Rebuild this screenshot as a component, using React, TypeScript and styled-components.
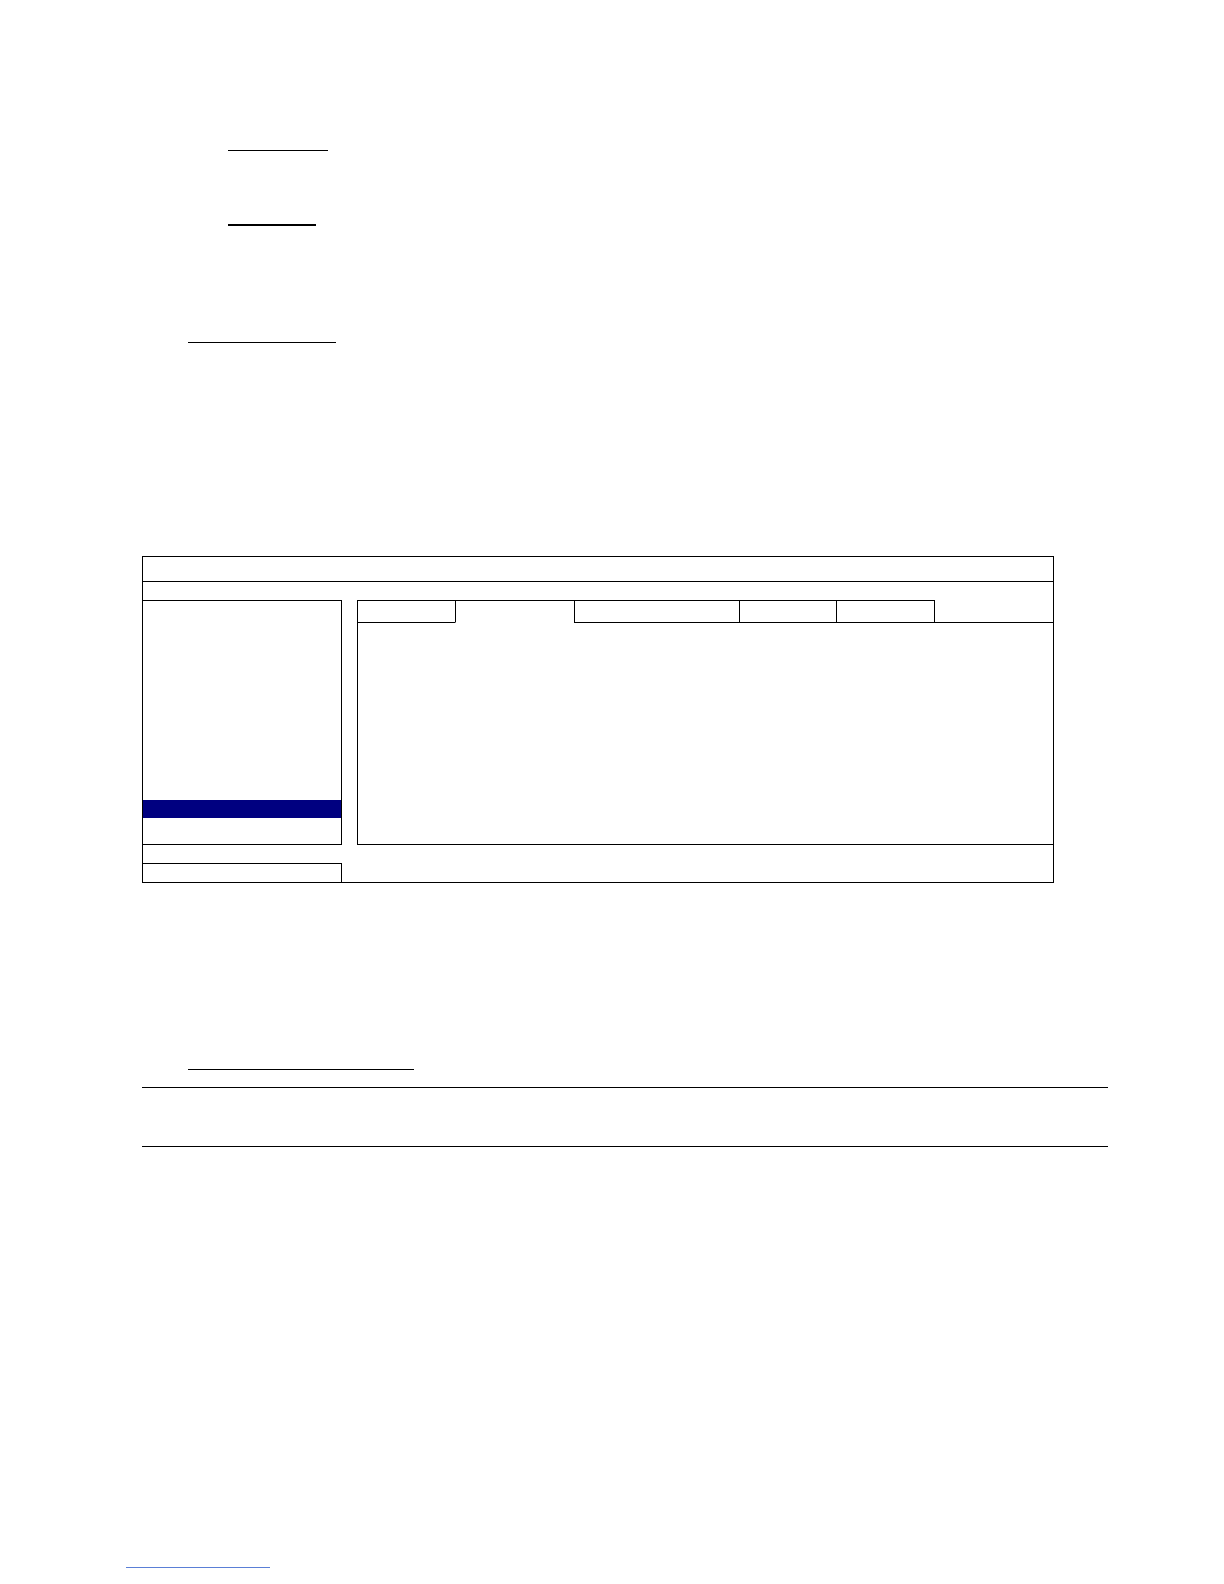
import styled, { createGlobalStyle } from 'styled-components'

const GlobalStyle = createGlobalStyle`
  html, body {
    margin: 0;
    padding: 0;
    background: #fff;
    font-family: 'Liberation Sans', Arial, sans-serif;
  }
  * { box-sizing: border-box; }
`

// ─── Page ──────────────────────────────────────────────────────────────────────
const Page = styled.div`
  width: 1224px;
  min-height: 1584px;
  display: flex;
  flex-direction: column;
  align-items: flex-start;
  background: #fff;
`

// blank field underlines / rules of the document
const Line = styled.div<{ $left: number; $width: number; $top: number; $thick?: number; $color?: string }>`
  margin-left: ${p => p.$left}px;
  margin-top: ${p => p.$top}px;
  width: ${p => p.$width}px;
  height: 0;
  border-top: ${p => p.$thick ?? 1}px solid ${p => p.$color ?? '#000'};
`

// ─── Dialog ────────────────────────────────────────────────────────────────────
const Dialog = styled.div`
  margin-left: 142px;
  margin-top: 213px;
  width: 912px;
  border: 1px solid #000;
  background: #fff;
`

const TitleBar = styled.div`
  height: 25px;
  border-bottom: 1px solid #000;
`

const SubBar = styled.div`
  height: 18px;
`

const Body = styled.div`
  display: grid;
  grid-template-columns: 199px 696px;
  column-gap: 15px;
  height: 282px;
`

const LeftCol = styled.div`
  display: flex;
  flex-direction: column;
`

const MenuPanel = styled.div`
  height: 245px;
  border-top: 1px solid #000;
  border-right: 1px solid #000;
  border-bottom: 1px solid #000;
  padding-top: 1px;
  display: flex;
  flex-direction: column;
`

const MenuItem = styled.div<{ $active?: boolean }>`
  height: 18px;
  flex-shrink: 0;
  background: ${p => (p.$active ? '#000080' : 'transparent')};
`

const SmallBox = styled.div`
  margin-top: 18px;
  height: 19px;
  border-top: 1px solid #000;
  border-right: 1px solid #000;
`

const RightCol = styled.div`
  display: flex;
  flex-direction: column;
`

const TabRow = styled.div`
  display: flex;
  height: 23px;
`

const Tab = styled.div<{ $w: number; $active?: boolean; $last?: boolean }>`
  width: ${p => p.$w}px;
  flex-shrink: 0;
  border-top: 1px solid #000;
  border-left: 1px solid #000;
  border-right: ${p => (p.$last ? '1px solid #000' : 'none')};
  border-bottom: 1px solid ${p => (p.$active ? 'transparent' : '#000')};
`

const TabFiller = styled.div`
  flex: 1;
  border-bottom: 1px solid #000;
`

const ContentPanel = styled.div`
  height: 222px;
  border-left: 1px solid #000;
  border-bottom: 1px solid #000;
`

const tabs = [
  { w: 98 },
  { w: 119, active: true },
  { w: 165 },
  { w: 97 },
  { w: 99, last: true },
]

export default function App() {
  return (
    <>
      <GlobalStyle />
      <Page>
        <Line $left={228} $width={100} $top={150} />
        <Line $left={228} $width={88} $top={73} $thick={2} />
        <Line $left={188} $width={148} $top={116} />

        <Dialog>
          <TitleBar />
          <SubBar />
          <Body>
            <LeftCol>
              <MenuPanel>
                {Array.from({ length: 11 }).map((_, i) => (
                  <MenuItem key={i} />
                ))}
                <MenuItem $active />
              </MenuPanel>
              <SmallBox />
            </LeftCol>
            <RightCol>
              <TabRow>
                {tabs.map((t, i) => (
                  <Tab key={i} $w={t.w} $active={t.active} $last={t.last} />
                ))}
                <TabFiller />
              </TabRow>
              <ContentPanel />
            </RightCol>
          </Body>
        </Dialog>

        <Line $left={188} $width={226} $top={186} />
        <Line $left={142} $width={966} $top={17} />
        <Line $left={142} $width={966} $top={58} />
        <Line $left={126} $width={144} $top={420} $color="#5a7fd6" />
      </Page>
    </>
  )
}
